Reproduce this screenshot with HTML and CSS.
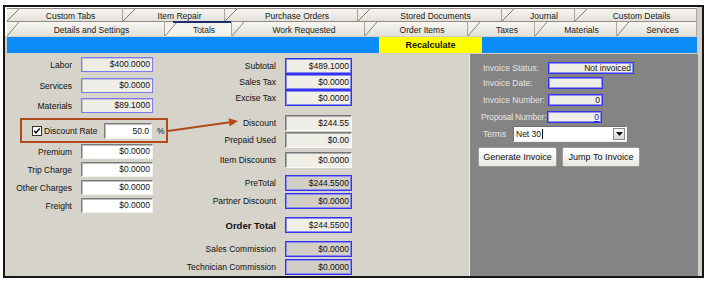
FILE: index.html
```html
<!DOCTYPE html>
<html lang="en">
<head>
  <meta charset="UTF-8">
  <title>Order Totals</title>
  <link rel="stylesheet" href="styles.css">
</head>
<body>

  <div class="window">
    <div class="tabs">
      <div class="tab-row top">
        <div class="tab">Custom Tabs</div>
        <div class="tab">Item Repair</div>
        <div class="tab">Purchase Orders</div>
        <div class="tab">Stored Documents</div>
        <div class="tab">Journal</div>
        <div class="tab">Custom Details</div>
      </div>
      <div class="tab-row bottom">
        <div class="tab">Details and Settings</div>
        <div class="tab active">Totals</div>
        <div class="tab">Work Requested</div>
        <div class="tab">Order Items</div>
        <div class="tab">Taxes</div>
        <div class="tab">Materials</div>
        <div class="tab">Services</div>
      </div>
    </div>

    <div class="bar">
      <div class="recalc">Recalculate</div>
    </div>

    <div class="main">
      <div class="fields">
        <div class="col-left">
          <div class="row"><span class="lbl">Labor</span><span class="val ro">$400.0000</span></div>
          <div class="row mt6"><span class="lbl">Services</span><span class="val ro">$0.0000</span></div>
          <div class="row mt5"><span class="lbl">Materials</span><span class="val ro">$89.1000</span></div>
          <div class="discount-box mt5">
            <svg class="check" width="10" height="10" viewBox="0 0 10 10">
              <rect x="0.5" y="0.5" width="9" height="9" fill="#fff" stroke="#333"/>
              <polyline points="2.2,4.8 4,6.8 7.8,2.6" fill="none" stroke="#111" stroke-width="1.5"/>
            </svg>
            <span class="check-lbl">Discount Rate</span>
            <span class="val edit rate">50.0</span>
            <span class="pct">%</span>
          </div>
          <div class="row mt1"><span class="lbl">Premium</span><span class="val edit">$0.0000</span></div>
          <div class="row mt3"><span class="lbl">Trip Charge</span><span class="val edit">$0.0000</span></div>
          <div class="row mt3"><span class="lbl">Other Charges</span><span class="val edit">$0.0000</span></div>
          <div class="row mt3"><span class="lbl">Freight</span><span class="val edit">$0.0000</span></div>
        </div>

        <div class="col-mid">
          <div class="row"><span class="lbl">Subtotal</span><span class="val blue">$489.1000</span></div>
          <div class="row"><span class="lbl">Sales Tax</span><span class="val blue">$0.0000</span></div>
          <div class="row"><span class="lbl">Excise Tax</span><span class="val blue">$0.0000</span></div>
          <div class="row mt9"><span class="lbl">Discount</span><span class="val sunk">$244.55</span></div>
          <div class="row mt1"><span class="lbl">Prepaid Used</span><span class="val sunk">$0.00</span></div>
          <div class="row mt4"><span class="lbl">Item Discounts</span><span class="val sunk">$0.0000</span></div>
          <div class="row mt7"><span class="lbl">PreTotal</span><span class="val blue grey">$244.5500</span></div>
          <div class="row mt2"><span class="lbl">Partner Discount</span><span class="val blue grey">$0.0000</span></div>
          <div class="row mt8"><span class="lbl total">Order Total</span><span class="val blue">$244.5500</span></div>
          <div class="row mt8"><span class="lbl">Sales Commission</span><span class="val blue grey">$0.0000</span></div>
          <div class="row mt2"><span class="lbl">Technician Commission</span><span class="val blue grey">$0.0000</span></div>
        </div>
      </div>

      <div class="invoice">
        <div class="inv-row"><span class="inv-lbl">Invoice Status:</span><span class="inv-val wide">Not invoiced</span></div>
        <div class="inv-row mt3"><span class="inv-lbl">Invoice Date:</span><span class="inv-val"></span></div>
        <div class="inv-row mt5"><span class="inv-lbl">Invoice Number:</span><span class="inv-val">0</span></div>
        <div class="inv-row mt5"><span class="inv-lbl tight">Proposal Number:</span><span class="inv-val"><span class="link">0</span></span></div>
        <div class="inv-row mt3">
          <span class="terms-lbl">Terms</span>
          <div class="select">
            <span class="sel-text">Net 30</span><span class="caret"></span>
            <span class="drop">
              <svg width="7" height="4" viewBox="0 0 7 4"><polygon points="0,0 7,0 3.5,4" fill="#111"/></svg>
            </span>
          </div>
        </div>
        <div class="buttons">
          <button class="btn gen">Generate Invoice</button>
          <button class="btn jump">Jump To Invoice</button>
        </div>
      </div>

      <svg class="arrow" width="80" height="25" viewBox="0 0 80 25">
        <line x1="3" y1="17" x2="65" y2="8.3" stroke="#b24a1c" stroke-width="2"/>
        <polygon points="73,7 64.7,12.4 63.5,4.2" fill="#b24a1c"/>
      </svg>
    </div>
  </div>

</body>
</html>
```

FILE: styles.css
```css
body {
  margin: 0;
  padding: 5px 0 0 3px;
  background: #fff;
  font-family: "Liberation Sans", Arial, sans-serif;
  font-size: 8.5px;
  color: #111;
}
.window {
  width: 701px;
  height: 273px;
  box-sizing: border-box;
  border: 2px solid #151515;
  background: #d4d0c8;
  display: flex;
  flex-direction: column;
}

/* tabs */
.tabs {
  padding: 1px 0 0 2px;
  border-right: 5px solid #d4d0c8;
  background: #fff;
}
.tab-row {
  display: flex;
}
.tab-row.top {
  height: 13px;
}
.tab-row.bottom {
  height: 15px;
}
.tab {
  position: relative;
  box-sizing: border-box;
  border-top: 1px solid #8e8c85;
  border-right: 1px solid #a8a69f;
  background: linear-gradient(#f7f6f2, #e2e0d8);
  padding-left: 12px;
  text-align: center;
  white-space: nowrap;
  color: #1a1a1a;
  line-height: 10px;
}
.tab::before {
  content: "";
  position: absolute;
  left: 0;
  top: 0;
  bottom: 0;
  width: 12px;
  background: linear-gradient(to bottom right, transparent calc(50% - 0.7px), #7c7a74 50%, transparent calc(50% + 0.7px));
}
.top .tab {
  padding-top: 2px;
}
.bottom .tab {
  padding-top: 3px;
}
.top .tab:nth-child(1) { width: 116px; }
.top .tab:nth-child(2) { width: 102px; }
.top .tab:nth-child(3) { width: 133px; }
.top .tab:nth-child(4) { width: 144px; }
.top .tab:nth-child(5) { width: 73px; }
.top .tab:nth-child(6) { width: 122px; }
.bottom .tab:nth-child(1) { width: 158px; }
.bottom .tab:nth-child(2) { width: 67px; }
.bottom .tab:nth-child(3) { width: 133px; }
.bottom .tab:nth-child(4) { width: 103px; }
.bottom .tab:nth-child(5) { width: 67px; }
.bottom .tab:nth-child(6) { width: 82px; }
.bottom .tab:nth-child(7) { width: 80px; }
.tab.active {
  background: #f4f3ee;
}
.tab.active::after {
  content: "";
  position: absolute;
  left: 8px;
  right: 0;
  top: -1px;
  height: 2px;
  background: #1e2d6b;
}

/* blue bar */
.bar {
  margin: 1px 5px 0 2px;
  height: 16px;
  background: #0b8cf7;
  display: flex;
  padding-left: 372px;
}
.recalc {
  width: 103px;
  background: #ffff00;
  font-weight: bold;
  font-size: 9px;
  text-align: center;
  line-height: 16px;
  color: #111;
}

/* main area */
.main {
  position: relative;
  flex: 1;
  margin-top: 1px;
  padding-right: 4px;
  display: flex;
}
.fields {
  flex: 1;
  display: flex;
  background: #d6d3cb;
}
.col-left {
  width: 175px;
  padding-top: 3px;
  display: flex;
  flex-direction: column;
}
.col-mid {
  width: 172px;
  padding-top: 4px;
  display: flex;
  flex-direction: column;
}
.row {
  display: flex;
  align-items: center;
}
.lbl {
  text-align: right;
  white-space: nowrap;
  margin-right: 9px;
}
.col-left .lbl {
  width: 67px;
}
.col-mid .lbl {
  width: 96px;
}
.lbl.total {
  font-weight: bold;
  font-size: 9.5px;
}
.val {
  box-sizing: border-box;
  text-align: right;
  padding-right: 2px;
  white-space: nowrap;
  overflow: hidden;
}
.col-left .val {
  width: 72px;
  height: 15px;
  line-height: 13px;
}
.col-mid .val {
  width: 67px;
  height: 16px;
  line-height: 14px;
}
.ro {
  background: #eeede6;
  border: 1px solid #7b7bee;
  box-shadow: inset 1px 1px 0 #c4c4d4;
}
.edit {
  background: #fff;
  border: 1px solid;
  border-color: #7a7a7a #f2f2f2 #f2f2f2 #7a7a7a;
  box-shadow: inset 1px 1px 0 #bdbdbd;
}
.blue {
  background: #efeee7;
  border: 1px solid #3434f0;
  box-shadow: inset 0 0 0 1px #8a8af2;
}
.blue.grey {
  background: #d2cfc6;
}
.sunk {
  background: #efeee7;
  border: 1px solid;
  border-color: #777 #fafafa #fafafa #777;
  box-shadow: inset 1px 1px 0 #aaa;
}

.discount-box {
  margin-left: 15px;
  width: 148px;
  height: 25px;
  box-sizing: border-box;
  border: 2px solid #b24a1c;
  padding-left: 10px;
  display: flex;
  align-items: center;
}
.check {
  margin-right: 2px;
}
.check-lbl {
  width: 60px;
  white-space: nowrap;
}
.col-left .val.rate {
  width: 48px;
  height: 16px;
  line-height: 14px;
}
.pct {
  margin-left: 5px;
}

.mt1 { margin-top: 1px; }
.mt2 { margin-top: 2px; }
.mt3 { margin-top: 3px; }
.mt4 { margin-top: 4px; }
.mt5 { margin-top: 5px; }
.mt6 { margin-top: 6px; }
.mt7 { margin-top: 7px; }
.mt8 { margin-top: 8px; }
.mt9 { margin-top: 9px; }

/* invoice panel */
.invoice {
  width: 229px;
  box-sizing: border-box;
  background: #848484;
  border-left: 1px solid #ebebeb;
  padding: 8px 0 0 13px;
}
.inv-row {
  display: flex;
  align-items: center;
}
.inv-lbl {
  width: 65px;
  color: #e4e4e4;
  white-space: nowrap;
}
.inv-lbl.tight {
  margin-left: -2px;
  width: 66px;
  letter-spacing: -0.2px;
}
.inv-val {
  box-sizing: border-box;
  width: 55px;
  height: 12px;
  line-height: 10px;
  background: #efeee7;
  border: 1px solid #3434ee;
  box-shadow: inset 0 0 0 1px #9090f0;
  text-align: right;
  padding-right: 2px;
  color: #111;
}
.inv-val.wide {
  width: 86px;
}
.link {
  color: #2525d8;
  text-decoration: underline;
}
.terms-lbl {
  width: 30px;
  color: #e4e4e4;
}
.select {
  width: 114px;
  height: 16px;
  box-sizing: border-box;
  background: #fff;
  border: 1px solid;
  border-color: #6e6e6e #f0f0f0 #f0f0f0 #6e6e6e;
  display: flex;
  align-items: center;
  padding-left: 2px;
}
.sel-text {
  color: #111;
}
.caret {
  width: 1px;
  height: 10px;
  background: #111;
  margin-left: 1px;
}
.drop {
  margin-left: auto;
  margin-right: 1px;
  width: 12px;
  height: 12px;
  box-sizing: border-box;
  border: 1px solid #8a8a8a;
  background: linear-gradient(#fafafa, #d8d8d8);
  display: flex;
  align-items: center;
  justify-content: center;
}
.buttons {
  display: flex;
  gap: 5px;
  margin: 5px 0 0 -5px;
}
.btn {
  height: 20px;
  padding: 0;
  border: 1px solid #9c9c9c;
  border-radius: 2px;
  background: linear-gradient(#ffffff, #e8e7e2);
  font-family: "Liberation Sans", Arial, sans-serif;
  font-size: 9px;
  color: #111;
}
.btn.gen {
  width: 79px;
}
.btn.jump {
  width: 78px;
}

.arrow {
  position: absolute;
  left: 160px;
  top: 60px;
}
```
